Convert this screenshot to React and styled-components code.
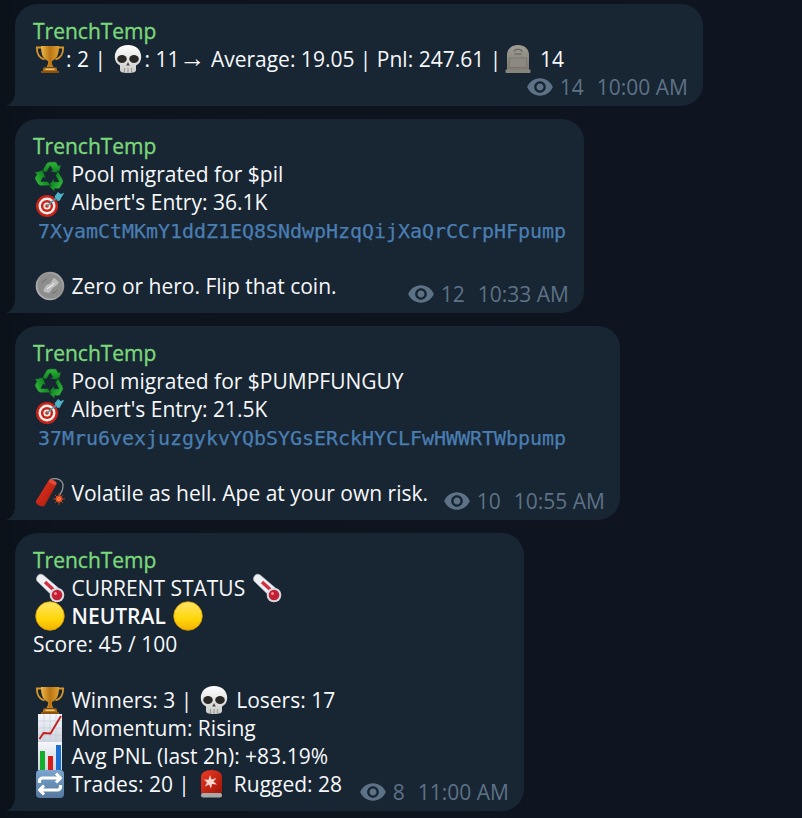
import React from "react";
import styled, { createGlobalStyle } from "styled-components";
import { MdVisibility } from "react-icons/md";

const Global = createGlobalStyle`
  html, body { margin: 0; padding: 0; background: #0e1621; }
  * { box-sizing: border-box; }
`;

const Page = styled.div`
  width: 802px;
  height: 818px;
  overflow: hidden;
  padding: 4px 0 0 15px;
  display: flex;
  flex-direction: column;
  gap: 13px;
  background: linear-gradient(90deg, #0a1119 0, #0d141e 60px, #0e1520 100%);
  font-family: "Open Sans", "Noto Sans", sans-serif;
  font-size: 21px;
  line-height: 28px;
  color: #f6f8fa;
`;

const Bubble = styled.div`
  position: relative;
  width: ${(p) => p.$width}px;
  padding: 13px 15px 5px 18px;
  background: #182533;
  border-radius: 22px 22px 22px 0;
  &::before {
    content: "";
    position: absolute;
    left: -10px;
    bottom: 0;
    width: 10px;
    height: 14px;
    background: radial-gradient(ellipse 10px 14px at 0 0, transparent 98%, #182533 100%);
  }
`;

const Name = styled.div`
  color: #7ad87a;
  font-weight: 400;
  font-size: 21px;
  -webkit-text-stroke: 0.35px #7ad87a;
`;

const Line = styled.div`
  white-space: pre;
  height: 28px;
`;

const Strong = styled.strong`
  font-weight: 600;
`;

const Arrow = styled.span`
  font-family: "Liberation Sans", sans-serif;
  font-size: 26px;
  line-height: 0;
`;

const Code = styled.div`
  font-family: "DejaVu Sans Mono", "Liberation Mono", monospace;
  font-size: 20px;
  padding-left: 5px;
  color: #4a7eb2;
  white-space: pre;
  letter-spacing: -0.04px;
  -webkit-text-stroke: 0.25px #4a7eb2;
  transform: translateY(1px);
`;

const LastRow = styled.div`
  display: flex;
  justify-content: space-between;
  align-items: flex-start;
  white-space: pre;
  height: 36px;
`;

const MetaRow = styled.div`
  display: flex;
  justify-content: flex-end;
  height: 28px;
`;

const Meta = styled.div`
  display: flex;
  align-items: center;
  height: 28px;
  margin-top: 8px;
  color: #5d7286;
  font-size: 21px;
  gap: 6px;
  ${MetaRow} & { margin-top: 0; }
`;

const Time = styled.span`
  margin-left: 7px;
`;

const EmojiBox = styled.span`
  display: inline-flex;
  width: 33px;
  height: 28px;
  margin-left: ${(p) => p.$shift || 0}px;
  vertical-align: top;
  align-items: center;
  justify-content: center;
  & > svg { flex: none; overflow: visible; }
`;

const E = ({ children, shift }) => (
  <EmojiBox $shift={shift}>
    <svg width="28" height="28" viewBox="0 0 28 28">{children}</svg>
  </EmojiBox>
);

const Defs = () => (
  <svg width="0" height="0" style={{ position: "absolute" }}>
    <defs>
      <linearGradient id="gold" x1="0" x2="1" y1="0" y2="0">
        <stop offset="0" stopColor="#f0b848" />
        <stop offset="0.5" stopColor="#b87514" />
        <stop offset="1" stopColor="#e2a02e" />
      </linearGradient>
      <linearGradient id="bone" x1="0" x2="0" y1="0" y2="1">
        <stop offset="0" stopColor="#ffffff" />
        <stop offset="1" stopColor="#c9c9c6" />
      </linearGradient>
      <linearGradient id="stone" x1="0" x2="0" y1="0" y2="1">
        <stop offset="0" stopColor="#a09d94" />
        <stop offset="1" stopColor="#7c7a72" />
      </linearGradient>
      <radialGradient id="coin" cx="0.6" cy="0.4" r="0.75">
        <stop offset="0" stopColor="#d2d2d2" />
        <stop offset="0.6" stopColor="#8f8f8f" />
        <stop offset="1" stopColor="#cfcfcf" />
      </radialGradient>
      <linearGradient id="yel" x1="0" x2="0" y1="0" y2="1">
        <stop offset="0" stopColor="#ffe566" />
        <stop offset="0.6" stopColor="#ffd60a" />
        <stop offset="1" stopColor="#f2b200" />
      </linearGradient>
      <linearGradient id="red" x1="0" x2="1" y1="0" y2="1">
        <stop offset="0" stopColor="#ee3a28" />
        <stop offset="1" stopColor="#a01505" />
      </linearGradient>
      <linearGradient id="blue" x1="0" x2="0" y1="0" y2="1">
        <stop offset="0" stopColor="#7ba4cf" />
        <stop offset="1" stopColor="#55799f" />
      </linearGradient>
      <linearGradient id="paper" x1="0" x2="0" y1="0" y2="1">
        <stop offset="0" stopColor="#f4f6fa" />
        <stop offset="1" stopColor="#cdd4de" />
      </linearGradient>
      <linearGradient id="green" x1="0" x2="0" y1="0" y2="1">
        <stop offset="0" stopColor="#2fb53a" />
        <stop offset="1" stopColor="#0c7e1c" />
      </linearGradient>
    </defs>
  </svg>
);

const Trophy = () => (
  <E>
    <path d="M6 2.500H.8c0 6 2.500 10.500 7.700 12M22 2.500h5.200c0 6-2.500 10.500-7.700 12" fill="none" stroke="#d4952a" strokeWidth="1.800" />
    <path d="M5 1h18c0 7-1.500 13-7 15-.4 2 .2 4 1.500 6h-7c1.300-2 1.900-4 1.500-6C6.500 14 5 8 5 1z" fill="url(#gold)" />
    <path d="M7.500 22.500h13l1 4.500h-15z" fill="#b4701a" />
    <rect x="5" y="26" width="18" height="2" fill="#8a5210" />
    <rect x="9.500" y="23.500" width="9" height="1.500" fill="#eec36a" />
  </E>
);
const Skull = () => (
  <E>
    <path d="M14 0C5.500 0 .8 5.500.8 12c0 4 2 7 5.200 8.500V25c0 2 2 3 8 3s8-1 8-3v-4.500c3.200-1.500 5.200-4.500 5.200-8.500C27.200 5.500 22.500 0 14 0z" fill="url(#bone)" />
    <ellipse cx="8" cy="14" rx="4.800" ry="4" fill="#2a2826" />
    <ellipse cx="20" cy="14" rx="4.800" ry="4" fill="#2a2826" />
    <path d="M14 17l-1.800 3.500h3.600z" fill="#4a4744" />
    <path d="M10.500 23v4.800M14 23v5M17.500 23v4.800" stroke="#8e8b86" strokeWidth="0.800" />
  </E>
);
const Stone = () => (
  <E shift={-5}>
    <path d="M3 25V10C3 4 7.500 0 14 0s11 4 11 10v15z" fill="url(#stone)" />
    <path d="M10 6.500c1-3 7-3 8 0M10.500 9h7" stroke="#5f5d56" strokeWidth="1.200" fill="none" />
    <rect x="5.500" y="13" width="17" height="9.500" fill="#8b8980" stroke="#6f6d65" strokeWidth="0.600" />
    <rect x="1.500" y="24.500" width="25" height="3.500" rx="0.800" fill="#86847b" />
  </E>
);
const arrow = "M5.300 11.500L9.800 3.600C11 1.600 12.500 1 14 1h4.500c1.200 0 2 .6 2.700 1.800l1.300 2.300 2.700-1.600L23 12.600l-9.300-1.800 2.800-1.600-2.300-4-3.500 6z";
const Recycle = () => (
  <E>
    <g transform="translate(0 .8)">
      <path d={arrow} fill="url(#green)" stroke="#182533" strokeWidth="0.700" />
      <path d={arrow} fill="url(#green)" stroke="#182533" strokeWidth="0.700" transform="rotate(120 14 15.500)" />
      <path d={arrow} fill="url(#green)" stroke="#182533" strokeWidth="0.700" transform="rotate(240 14 15.500)" />
    </g>
  </E>
);
const Target = () => (
  <E>
    <circle cx="11" cy="18" r="11" fill="#c8241c" />
    <circle cx="11" cy="18" r="8.500" fill="#f4efe9" />
    <circle cx="11" cy="18" r="6.100" fill="#c8241c" />
    <circle cx="11" cy="18" r="3.600" fill="#f4efe9" />
    <circle cx="11" cy="18" r="1.800" fill="#c8241c" />
    <path d="M11 18L21 9.500" stroke="#4a9ab0" strokeWidth="1.600" />
    <path d="M18.500 8.500L22 4l2.500 2 3.800-1-3.300 5-1 2.500-2.500.5-1.300-2z" fill="#4fb3c8" />
  </E>
);
const Coin = () => (
  <E>
    <circle cx="14" cy="14" r="14.300" fill="url(#coin)" />
    <circle cx="14" cy="14" r="12.300" fill="#8e8e8e" />
    <path d="M7 19c2-3 2-6 6-7 3-1 2-4 5-6 2 1 4 3 5 5-2 1-2 3-5 4-2 1-3 4-5 6-2 0-4-1-6-2z" fill="#bdbdbd" />
    <path d="M11 17c1-1 3-2 4-3 1 0 2-1 3-3" stroke="#e6e6e6" strokeWidth="1.400" fill="none" />
    <path d="M6 11c1-2 3-3 5-4M16 21c2 0 4-1 5-3" stroke="#6f6f6f" strokeWidth="1" fill="none" />
  </E>
);
const Cracker = () => (
  <E>
    <path d="M14 0.500c3-1 7-1 10 .5 3 2 3.500 6 2.500 9.500-.5 2-2 4-3 6" stroke="#9a9a9a" strokeWidth="1.200" fill="none" />
    <path d="M0 22L13 1l7.500 4.300L8.500 27c-2.800 1.800-9.500-2-8.500-5z" fill="url(#red)" />
    <ellipse cx="16.700" cy="3.100" rx="4.300" ry="2" transform="rotate(30 16.700 3.100)" fill="#e14a34" />
    <circle cx="23" cy="20" r="3.400" fill="#e53c18" />
    <circle cx="23" cy="20" r="1.700" fill="#ffe08a" />
    <path d="M23 14v12M17 20h12M19 16l8 8M27 16l-8 8" stroke="#e8552a" strokeWidth="0.700" />
  </E>
);
const Thermo = () => (
  <E>
    <path d="M1.500 2c1.500-2.300 4-2.300 6-.7l15 12.700-6.500 7.500-14.500-14c-1.400-1.300-1.400-3.700 0-5.500z" fill="#eceff3" stroke="#b8bec6" strokeWidth="0.600" />
    <path d="M9 8l11 10" stroke="#d32f3f" strokeWidth="3.400" />
    <circle cx="21" cy="21" r="7.300" fill="#d8dce2" />
    <circle cx="21" cy="21" r="5.300" fill="#c41f34" />
    <circle cx="19.500" cy="19.500" r="1.500" fill="#f08b96" />
  </E>
);
const Yellow = () => (
  <E>
    <circle cx="14" cy="14" r="14.300" fill="url(#yel)" stroke="#d89800" strokeWidth="0.800" />
  </E>
);
const ChartUp = () => (
  <E>
    <rect x="2" y="0" width="24" height="28" fill="url(#paper)" />
    <path d="M2 7h24M2 14h24M2 21h24M8 0v28M14 0v28M20 0v28" stroke="#bac4d2" strokeWidth="0.500" />
    <path d="M3.500 25l4-6 7 .5L25 2" stroke="#c5201c" strokeWidth="1.900" fill="none" />
  </E>
);
const Bars = () => (
  <E>
    <rect x="2" y="0" width="24" height="28" fill="url(#paper)" />
    <rect x="4" y="9" width="5" height="19" fill="#13ae2a" />
    <rect x="12" y="14" width="5" height="14" fill="#d31e1e" />
    <rect x="20" y="3" width="5" height="25" fill="#1a6fd0" />
  </E>
);
const RepeatE = () => (
  <E>
    <rect x="0" y="0" width="28" height="28" rx="4" fill="url(#blue)" />
    <path d="M20 3.500L24.500 8 20 12.500M3.500 13v-2a3 3 0 0 1 3-3h18M8 24.500L3.500 20 8 15.500M24.500 15v2a3 3 0 0 1-3 3h-18" stroke="#fff" strokeWidth="3.100" fill="none" strokeLinejoin="round" />
  </E>
);
const Siren = () => (
  <E>
    <path d="M3 23V7c0-4 4-7 10.500-7S24 3 24 7v16z" fill="url(#red)" />
    <path d="M12 5l1.500 4.500 5-1.500-3 3.500 3.500 3-5-.5-1 4.500-2-4-4 2 2-4-3-3 4.500.3z" fill="#ffd8d0" />
    <rect x="3" y="23" width="21" height="4.500" rx="2" fill="#a9a9a9" />
  </E>
);

const MetaInfo = ({ views, time }) => (
  <Meta>
    <MdVisibility size={28} />
    <span>{views}</span>
    <Time>{time}</Time>
  </Meta>
);

const Migration = ({ ticker, entry, address }) => (
  <>
    <Line><Recycle /> Pool migrated for {ticker}</Line>
    <Line><Target /> Albert's Entry: {entry}</Line>
    <Code>{address}</Code>
    <Line />
  </>
);

export default function App() {
  return (
    <>
      <Global />
      <Defs />
      <Page>
        <Bubble $width={688}>
          <Name>TrenchTemp</Name>
          <Line><Trophy />: 2 | <Skull />: 11<Arrow>→</Arrow> Average: 19.05 | Pnl: 247.61 | <Stone /> 14</Line>
          <MetaRow><MetaInfo views="14" time="10:00 AM" /></MetaRow>
        </Bubble>
        <Bubble $width={569}>
          <Name>TrenchTemp</Name>
          <Migration ticker="$pil" entry="36.1K" address="7XyamCtMKmY1ddZ1EQ8SNdwpHzqQijXaQrCCrpHFpump" />
          <LastRow>
            <span><Coin /> Zero or hero. Flip that coin.</span>
            <MetaInfo views="12" time="10:33 AM" />
          </LastRow>
        </Bubble>
        <Bubble $width={605}>
          <Name>TrenchTemp</Name>
          <Migration ticker="$PUMPFUNGUY" entry="21.5K" address="37Mru6vexjuzgykvYQbSYGsERckHYCLFwHWWRTWbpump" />
          <LastRow>
            <span><Cracker /> Volatile as hell. Ape at your own risk.</span>
            <MetaInfo views="10" time="10:55 AM" />
          </LastRow>
        </Bubble>
        <Bubble $width={509}>
          <Name>TrenchTemp</Name>
          <Line><Thermo /> CURRENT STATUS <Thermo /></Line>
          <Line><Yellow /> <Strong>NEUTRAL</Strong> <Yellow /></Line>
          <Line>Score: 45 / 100</Line>
          <Line />
          <Line><Trophy /> Winners: 3 | <Skull /> Losers: 17</Line>
          <Line><ChartUp /> Momentum: Rising</Line>
          <Line><Bars /> Avg PNL (last 2h): +83.19%</Line>
          <LastRow>
            <span><RepeatE /> Trades: 20 | <Siren /> Rugged: 28</span>
            <MetaInfo views="8" time="11:00 AM" />
          </LastRow>
        </Bubble>
      </Page>
    </>
  );
}
